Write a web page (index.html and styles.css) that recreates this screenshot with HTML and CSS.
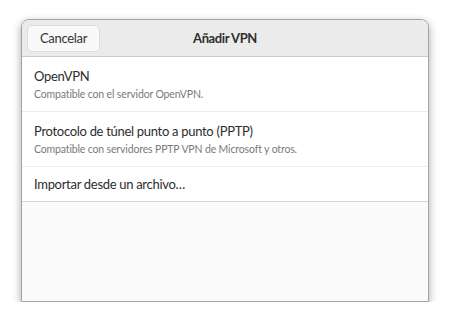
FILE: index.html
```html
<!DOCTYPE html>
<html lang="es">
<head>
<meta charset="utf-8">
<title>Añadir VPN</title>
<link rel="stylesheet" href="styles.css">
</head>
<body>
<div class="dialog">
  <header class="headerbar">
    <button class="btn">Cancelar</button>
    <h1 class="title">Añadir VPN</h1>
  </header>
  <ul class="list">
    <li class="row">
      <div class="row-title">OpenVPN</div>
      <div class="row-sub">Compatible con el servidor OpenVPN.</div>
    </li>
    <li class="row">
      <div class="row-title">Protocolo de túnel punto a punto (PPTP)</div>
      <div class="row-sub">Compatible con servidores PPTP VPN de Microsoft y otros.</div>
    </li>
    <li class="row row-single">
      <div class="row-title">Importar desde un archivo…</div>
    </li>
  </ul>
</div>
</body>
</html>
```
FILE: styles.css
```css
html, body {
  margin: 0;
  padding: 0;
  background: #ffffff;
}
body {
  padding: 19px 21px 0 21px;
  font-family: "Lato", "Noto Sans", sans-serif;
  color: #303030;
}
.dialog {
  width: 406px;
  height: 281px;
  border: 1px solid #a3a3a3;
  border-radius: 8px 8px 0 0;
  background: #fafafa;
  box-shadow: 0 3px 9px rgba(0, 0, 0, 0.35);
  overflow: hidden;
  display: flex;
  flex-direction: column;
}
.headerbar {
  position: relative;
  height: 36px;
  background: #ebebeb;
  border-bottom: 1px solid #c9c9c9;
  display: flex;
  align-items: center;
  padding: 0 5px;
}
.btn {
  height: 27px;
  width: 73px;
  border: 1px solid #dcdcdc;
  border-radius: 5px;
  background: #f9f9f9;
  font-family: inherit;
  font-size: 13px;
  letter-spacing: -0.3px;
  color: #333333;
  padding: 0;
}
.title {
  position: absolute;
  left: 0;
  right: 0;
  top: 0;
  bottom: 0;
  margin: 0;
  display: flex;
  align-items: center;
  justify-content: center;
  font-size: 13px;
  font-weight: 700;
  letter-spacing: -0.4px;
  color: #303030;
  pointer-events: none;
}
.list {
  list-style: none;
  margin: 0;
  padding: 0;
  background: #ffffff;
  border-bottom: 1px solid #d6d6d6;
}
.row {
  padding: 10px 12px 9px 12px;
  border-bottom: 1px solid #ebebeb;
}
.row:last-child {
  border-bottom: none;
}
.row-single {
  padding: 8px 12px 8px 12px;
}
.row-title {
  font-size: 13px;
  line-height: 18px;
  letter-spacing: -0.3px;
  color: #2e2e2e;
}
.row-sub {
  margin-top: 2px;
  font-size: 10.5px;
  line-height: 15px;
  letter-spacing: -0.15px;
  color: #7a7a7a;
}
```
